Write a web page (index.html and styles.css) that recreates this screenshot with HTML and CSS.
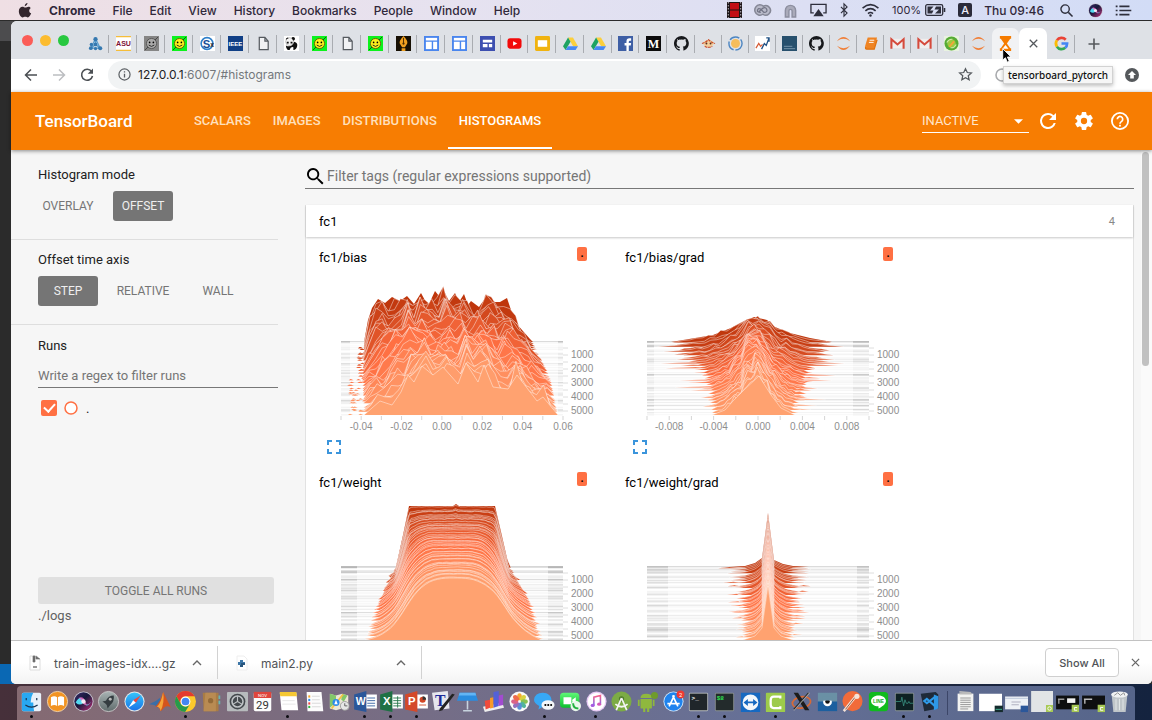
FILE: index.html
```html
<!DOCTYPE html>
<html lang="en">
<head>
<meta charset="utf-8">
<title>tensorboard_pytorch</title>
<link rel="stylesheet" href="styles.css">
</head>
<body class="desktop">

<svg class="sprite" width="0" height="0" aria-hidden="true">
  <defs>
    <linearGradient id="g-siri" x1="0" y1="0" x2="1" y2="1"><stop offset="0" stop-color="#3a2a6a"/><stop offset=".45" stop-color="#16173a"/><stop offset="1" stop-color="#c0307a"/></linearGradient>
    <linearGradient id="g-blue" x1="0" y1="0" x2="0" y2="1"><stop offset="0" stop-color="#35c5fa"/><stop offset="1" stop-color="#1a73e8"/></linearGradient>
    <linearGradient id="g-gray" x1="0" y1="0" x2="0" y2="1"><stop offset="0" stop-color="#a9b4b4"/><stop offset="1" stop-color="#5f6b6c"/></linearGradient>
    <linearGradient id="g-green" x1="0" y1="0" x2="0" y2="1"><stop offset="0" stop-color="#5ff777"/><stop offset="1" stop-color="#0bbf2c"/></linearGradient>
    <linearGradient id="g-music" x1="0" y1="0" x2="0" y2="1"><stop offset="0" stop-color="#f65f8a"/><stop offset="1" stop-color="#7b6cf0"/></linearGradient>
  </defs>
  <symbol id="f-net" viewBox="0 0 16 16"><path d="M8 3 3 13h10zM8 3v6M3 13l5-4 5 4" stroke="#5d9fcd" stroke-width="1.4" fill="none"/><g fill="#3579b0"><circle cx="8" cy="3.4" r="2.3"/><circle cx="8" cy="9" r="2"/><circle cx="3.6" cy="9" r="1.8"/><circle cx="3" cy="13" r="2"/><circle cx="13" cy="13" r="2.2"/><circle cx="8" cy="13.4" r="1.8"/></g></symbol>
  <symbol id="f-smile" viewBox="0 0 16 16"><rect width="16" height="16" fill="#0cf21c"/><path d="M1 15 15 1" stroke="#075a10"/><circle cx="8" cy="8" r="5.4" fill="#fdf01c" stroke="#685c08"/><circle cx="6" cy="6.8" r=".9"/><circle cx="10" cy="6.8" r=".9"/><path d="M5 9.6q3 3 6 0" fill="none" stroke="#222"/></symbol>
  <symbol id="f-smileg" viewBox="0 0 16 16"><rect width="16" height="16" fill="#858585"/><path d="M1 15 15 1" stroke="#444"/><circle cx="8" cy="8" r="5.4" fill="#aaa" stroke="#555"/><circle cx="6" cy="6.8" r=".9"/><circle cx="10" cy="6.8" r=".9"/><path d="M5 9.6q3 3 6 0" fill="none" stroke="#222"/></symbol>
  <symbol id="f-doc" viewBox="0 0 16 16"><path d="M3.500 1.500h6l3.500 4v9H3.500zM9.500 1.500v4H13" fill="#f1f2f4" stroke="#555a5f" stroke-width="1.3"/></symbol>
  <symbol id="f-lay" viewBox="0 0 16 16"><rect x="1" y="1" width="14" height="14" fill="#fff" stroke="#4a86ee" stroke-width="2"/><path d="M1 5.500h14M9 5.500V15" stroke="#4a86ee" stroke-width="1.5"/></symbol>
  <symbol id="f-drive" viewBox="0 0 16 16"><path d="M5.400 1.500h5.200L16 10.800h-5.200z" fill="#fbcf3d"/><path d="M5.400 1.500 8 6 2.700 15 0 10.800z" fill="#1da362"/><path d="M5.300 10.800H16L13.400 15H2.700z" fill="#4688f4"/></symbol>
  <symbol id="f-git" viewBox="0 0 16 16"><path fill="#17191c" d="M8 0a8 8 0 0 0-2.500 15.600c.4.1.5-.2.5-.4v-1.400c-2.200.5-2.700-1-2.700-1-.4-.9-.9-1.200-.9-1.200-.7-.5.1-.5.1-.5.8.1 1.200.8 1.200.8.7 1.300 1.900.9 2.300.7.1-.5.3-.9.5-1.100-1.800-.2-3.600-.9-3.600-4 0-.9.3-1.600.8-2.100-.1-.2-.4-1 .1-2.100 0 0 .7-.2 2.200.8a7.500 7.500 0 0 1 4 0c1.500-1 2.200-.8 2.200-.8.4 1.100.2 1.900.1 2.100.5.6.8 1.300.8 2.100 0 3.100-1.900 3.700-3.700 3.900.3.300.6.8.6 1.500v2.200c0 .2.100.5.6.4A8 8 0 0 0 8 0z"/></symbol>
  <symbol id="f-jup" viewBox="0 0 16 16"><path d="M1 5.500Q8-3.500 15 5.500 8 .5 1 5.500zM1 10.500q7 9 14 0-7 5-14 0z" fill="#f0803a"/></symbol>
  <symbol id="f-gmail" viewBox="0 0 16 16"><path d="M1 3h14v10H1z" fill="#f0eeee"/><path d="M1.500 13.500V3.500L8 9l6.500-5.500v10" fill="none" stroke="#d54a3c" stroke-width="2.200"/></symbol>
  <symbol id="i-siri" viewBox="0 0 24 24"><circle cx="12" cy="12" r="11.500" fill="#c9c9d4"/><circle cx="12" cy="12" r="10.500" fill="url(#g-siri)"/><path d="M3 13q6-10 9-1t9 0q-5 7-9 1-4 5-9 0z" fill="#52d8f0"/><path d="M6 8q6-3 8 4t6 1q-6 6-9 0-3-5-5-5z" fill="#e765c0" opacity=".8"/><circle cx="12" cy="12" r="2.500" fill="#fff" opacity=".85"/></symbol>
</svg>

<header class="menubar">
  <nav class="menus" aria-label="Menu bar">
    <svg class="apple" viewBox="0 0 16 18" aria-hidden="true"><path fill="#33262d" d="M11 0c.1 1.700-1.500 3.800-3.300 3.800C7.500 2 9.300.2 11 0zM14.800 6.200c-2.600 1.600-2.200 5 .6 6.200-.9 2.500-2.400 4.900-4 4.900-1.200 0-1.600-.8-3.100-.8s-2 .8-3.200.8C3 17.200.6 13.500.6 9.900c0-3.400 2.200-5.300 4.300-5.300 1.500 0 2.400.9 3.600.9 1.100 0 2-1 3.800-1 1 0 2 .6 2.500 1.700z"/></svg>
    <a href="#chrome" class="app-name">Chrome</a><a href="#file">File</a><a href="#edit">Edit</a><a href="#view">View</a><a href="#history">History</a><a href="#bookmarks">Bookmarks</a><a href="#people">People</a><a href="#window">Window</a><a href="#help">Help</a>
  </nav>
  <div class="status">
    <svg viewBox="0 0 15 16" width="15" height="16"><path fill="#1c1416" d="M0 0h15v16H0z"/><path fill="#c10d16" d="M3 1h9v6.500H3zM3 8.500h9V15H3z"/><path d="M1.300 0v16M13.700 0v16" stroke="#b9b3bd" stroke-width="1" stroke-dasharray="1.500 1.500"/></svg>
    <svg viewBox="0 0 18 14" width="17" height="14"><path d="M6 1.500a5.500 5.500 0 1 0 3.500 10A5 5 0 1 0 10 3 5.500 5.500 0 0 0 6 1.500z" fill="#b9bac9" stroke="#858796" stroke-width="1.600"/><path d="m5.500 8.500 4-3.500q3-1.500 4 1.500t-3 3L7 6Q4.500 4.500 3.800 7t3.400 2.500" fill="none" stroke="#727485" stroke-width="1.300"/></svg>
    <svg viewBox="0 0 16 16" width="15" height="15"><path d="M2.500 15V8a5.500 5.500 0 0 1 11 0v7H9.700V8.500a1.700 1.700 0 0 0-3.400 0V15z" fill="#aaabba" stroke="#8d8fa0" stroke-width="1.500"/></svg>
    <svg viewBox="0 0 18 14" width="17" height="14"><path d="M4 10H1V1h16v9h-3" fill="none" stroke="#2e2f3c" stroke-width="1.400"/><path d="m9 6 5.500 7.500h-11z" fill="#2e2f3c"/></svg>
    <svg viewBox="0 0 10 16" width="10" height="14"><path d="m1.500 4.500 7 7L5 15V1l3.500 3.500-7 7" fill="none" stroke="#2e2f3c" stroke-width="1.300"/></svg>
    <svg viewBox="0 0 20 15" width="19" height="14"><path d="M1.500 5.500q8.500-7.500 17 0M4.500 8.500q5.500-4.800 11 0M7.300 11.300q2.700-2.300 5.400 0" fill="none" stroke="#2e2f3c" stroke-width="1.700"/><circle cx="10" cy="13.300" r="1.300" fill="#2e2f3c"/></svg>
    <span class="battery"><span class="percent">100%</span>
    <svg viewBox="0 0 21 12" width="21" height="12"><rect x=".7" y=".7" width="17" height="10.600" rx="1.500" fill="none" stroke="#2e2f3c" stroke-width="1.300"/><path d="M2.500 2.500h6L5 6.500h3.500L7 9.500H2.500zM16 2.500h-5L9.500 5.500h4.500L10 9.500h6z" fill="#2e2f3c"/><path d="M19.500 4v4" stroke="#2e2f3c" stroke-width="1.600"/></svg></span>
    <span class="input-source">A</span>
    <span class="clock">Thu 09:46</span>
    <svg class="spotlight" viewBox="0 0 14 14" width="13" height="13"><circle cx="5.500" cy="5.500" r="4.500" fill="none" stroke="#2e2f3c" stroke-width="1.500"/><path d="m9 9 4.500 4.500" stroke="#2e2f3c" stroke-width="1.600"/></svg>
    <svg width="15" height="15"><use href="#i-siri"/></svg>
    <svg viewBox="0 0 17 12" width="17" height="11"><path d="M4 1.500h11M4 6h13M4 10.500h11" stroke="#2e2f3c" stroke-width="1.700"/><path d="M0 1.500h2M0 6h2M0 10.500h2" stroke="#2e2f3c" stroke-width="1.700"/></svg>
  </div>
</header>

<div class="window">
  <div class="tabstrip">
    <div class="lights"><button class="light close" aria-label="Close window"></button><button class="light minimize" aria-label="Minimize window"></button><button class="light maximize" aria-label="Zoom window"></button></div>
    <div class="tabs">
      <button class="tab" aria-label="Tab 1"><svg><use href="#f-net"/></svg></button>
      <button class="tab" aria-label="Tab 2"><svg viewBox="0 0 16 16"><rect width="16" height="16" fill="#fff"/><path d="M0 .7h16M0 15.300h16" stroke="#f5bd3a" stroke-width="1.400"/><text x="8" y="11" class="ico" font-size="7.500" fill="#7d1237" text-anchor="middle">ASU</text></svg></button>
      <button class="tab" aria-label="Tab 3"><svg><use href="#f-smileg"/></svg></button>
      <button class="tab" aria-label="Tab 4"><svg><use href="#f-smile"/></svg></button>
      <button class="tab" aria-label="Tab 5"><svg viewBox="0 0 16 16"><rect width="16" height="16" fill="#fff"/><circle cx="7.500" cy="8" r="6.300" fill="none" stroke="#2e7fca" stroke-width="1.700"/><text x="7" y="12.500" class="ico" font-size="12" fill="#164f98" text-anchor="middle">S</text><text x="13" y="12" class="ico" font-size="7" fill="#222" text-anchor="middle">x</text></svg></button>
      <button class="tab" aria-label="Tab 6"><svg viewBox="0 0 16 16"><rect width="16" height="16" fill="#103f86"/><text x="8" y="10.500" class="ico" font-size="6.500" fill="#fff" text-anchor="middle">IEEE</text></svg></button>
      <button class="tab" aria-label="Tab 7"><svg><use href="#f-doc"/></svg></button>
      <button class="tab" aria-label="Tab 8"><svg viewBox="0 0 16 16"><rect width="16" height="16" fill="#fff"/><circle cx="6" cy="6" r="4.200" fill="#f4f4f4" stroke="#999" stroke-width=".6"/><path d="M2 4a2 2 0 0 1 3-2zM8 2a2 2 0 1 1 2 3zM3 6h2v2H3zM7 6h2v2H7zM2 10q6 3 9-4 4 1 3 5-1 4-4 4v-3q-3-1-4 3H4q-2-2-2-5z" fill="#111"/></svg></button>
      <button class="tab" aria-label="Tab 9"><svg><use href="#f-smile"/></svg></button>
      <button class="tab" aria-label="Tab 10"><svg><use href="#f-doc"/></svg></button>
      <button class="tab" aria-label="Tab 11"><svg><use href="#f-smile"/></svg></button>
      <button class="tab" aria-label="Tab 12"><svg viewBox="0 0 16 16"><rect width="16" height="16" fill="#171004"/><path d="M8 0q5 5 4 8l-2.500 4H6.500L4 8Q3 5 8 0zM6 13h4v3H6z" fill="#f0a020"/><path d="M8 2v6" stroke="#4a2b00"/><circle cx="8" cy="8" r="1.200" fill="#4a2b00"/></svg></button>
      <button class="tab" aria-label="Tab 13"><svg><use href="#f-lay"/></svg></button>
      <button class="tab" aria-label="Tab 14"><svg><use href="#f-lay"/></svg></button>
      <button class="tab" aria-label="Tab 15"><svg viewBox="0 0 16 16"><rect width="16" height="16" fill="#3d4fb0"/><path d="M3 4h10v3H3zM3 8.500h5V12H3zM9.500 8.500H13V12H9.500z" fill="#fff"/></svg></button>
      <button class="tab slim" aria-label="Tab 16"><svg viewBox="0 0 16 16"><rect x=".5" y="2.500" width="15" height="11" rx="3" fill="#f20a0a"/><path d="m6.500 5.500 4.500 2.500-4.500 2.500z" fill="#fff"/></svg></button>
      <button class="tab" aria-label="Tab 17"><svg viewBox="0 0 16 16"><rect width="16" height="16" rx="1.500" fill="#f0b310"/><rect x="3" y="4.500" width="10" height="7" fill="#fff"/></svg></button>
      <button class="tab" aria-label="Tab 18"><svg><use href="#f-drive"/></svg></button>
      <button class="tab" aria-label="Tab 19"><svg><use href="#f-drive"/></svg></button>
      <button class="tab slim" aria-label="Tab 20"><svg viewBox="0 0 16 16"><rect width="16" height="16" fill="#3e5fa5"/><path d="M9 16V10H7V7.500h2V6q0-3.500 3.300-3.500H14V5h-1.300Q11.500 5 11.500 6.200v1.300H14L13.600 10h-2.100v6z" fill="#fff"/></svg></button>
      <button class="tab" aria-label="Tab 21"><svg viewBox="0 0 16 16"><rect width="16" height="16" fill="#0c0c0c"/><text x="8" y="12.500" class="serif" font-size="13" fill="#fff" text-anchor="middle">M</text></svg></button>
      <button class="tab" aria-label="Tab 22"><svg><use href="#f-git"/></svg></button>
      <button class="tab slim" aria-label="Tab 23"><svg viewBox="0 0 16 16"><ellipse cx="8" cy="8" rx="5.500" ry="3.600" fill="#f2cf9c"/><path d="M1 8q4-1 7-4 3 3 7 4M4 11q4 2.500 8 0" stroke="#cc4e2a" stroke-width="1.300" fill="none" stroke-dasharray="3 .8"/><circle cx="5.800" cy="8" r="1" fill="#5b2a1a"/><circle cx="10.200" cy="8" r="1" fill="#5b2a1a"/></svg></button>
      <button class="tab slim" aria-label="Tab 24"><svg viewBox="0 0 16 16"><circle cx="8" cy="8" r="4.800" fill="#f6bd5b"/><circle cx="8" cy="8" r="7" fill="none" stroke="#4d86c2" stroke-width="1.500" stroke-dasharray="11 2"/></svg></button>
      <button class="tab slim" aria-label="Tab 25"><svg viewBox="0 0 16 16"><rect width="16" height="16" fill="#fff"/><path d="m1 13 3-5 2 3 2-2" fill="none" stroke="#d65a35" stroke-width="1.300"/><path d="m7 14 3-6 2 2 3-8M12 2h3v4" fill="none" stroke="#1d4f83" stroke-width="1.400"/></svg></button>
      <button class="tab slim" aria-label="Tab 26"><svg viewBox="0 0 16 16"><rect width="16" height="16" fill="#27506d"/><path d="M2 11h9M2 13.500h12" stroke="#8fa9bb" stroke-width=".8"/></svg></button>
      <button class="tab slim" aria-label="Tab 27"><svg><use href="#f-git"/></svg></button>
      <button class="tab slim" aria-label="Tab 28"><svg><use href="#f-jup"/></svg></button>
      <button class="tab slim" aria-label="Tab 29"><svg viewBox="0 0 16 16"><path d="M5 1.500h10l-3 10H2z" fill="#ef8423"/><path d="M3 11.500q-1 2.500 1 2.500h8l3-10" fill="#ef8423" stroke="#e0720f" stroke-width="1.300"/><path d="M7 4.500h5M6.300 6.800h5" stroke="#fff" stroke-width="1"/></svg></button>
      <button class="tab slim" aria-label="Tab 30"><svg><use href="#f-gmail"/></svg></button>
      <button class="tab slim" aria-label="Tab 31"><svg><use href="#f-gmail"/></svg></button>
      <button class="tab slim" aria-label="Tab 32"><svg viewBox="0 0 16 16"><rect width="16" height="16" fill="#e9f3e0"/><circle cx="8" cy="8" r="7.500" fill="#55ab35"/><circle cx="8" cy="8" r="4.500" fill="#9cc93f"/><path d="M5 11 10 5l1.500 1.500-5 5.500z" fill="#f4a53a"/><path d="M3 7q2-4 6-3.500M13 9q-2 4-6 3.500" stroke="#cdeaa8" stroke-width="1.200" fill="none"/></svg></button>
      <button class="tab slim last" aria-label="Tab 33"><svg><use href="#f-jup"/></svg></button>
      <button class="tab slim hover" aria-label="tensorboard_pytorch"><svg viewBox="0 0 16 16"><path d="M2 0h12v3H13L9.500 8l3.500 5h1v3H2v-3h1l3.500-5L3 3H2z" fill="#f57c00"/><path d="M8 9.500 4.800 13.700h6.400z" fill="#fff"/></svg>
        <svg class="pointer" viewBox="0 0 10 15"><path d="M.7.700v11.500l2.700-2.500 1.900 4.500 2-1-1.900-4.200h3.700z" fill="#000" stroke="#fff" stroke-width=".9"/></svg>
        <span class="tooltip" role="tooltip">tensorboard_pytorch</span></button>
      <button class="tab active" aria-label="Close tab"><svg viewBox="0 0 16 16"><path d="m4 4 8 8M12 4l-8 8" stroke="#54585c" stroke-width="1.400"/></svg></button>
      <button class="tab google" aria-label="Google"><svg viewBox="0 0 16 16"><g fill="none" stroke-width="2.800"><path d="M3.100 4.600A6 6 0 0 1 12.500 4" stroke="#ea4335"/><path d="M3.100 11.400a6 6 0 0 1 0-6.800" stroke="#fbbc05"/><path d="M12 12.500a6 6 0 0 1-8.900-1.100" stroke="#34a853"/><path d="M8 8h6q0 3-2 4.500" stroke="#4285f4"/></g></svg></button>
      <button class="new-tab" aria-label="New tab"><svg viewBox="0 0 12 12"><path d="M6 .5v11M.5 6h11" stroke="#55595d" stroke-width="1.600"/></svg></button>
    </div>
  </div>

  <div class="toolbar">
    <button class="tool" aria-label="Back"><svg viewBox="0 0 14 14"><path d="M13 7H1.800M7 1.500 1.500 7 7 12.500" fill="none" stroke="#4b4f53" stroke-width="1.500"/></svg></button>
    <button class="tool" aria-label="Forward"><svg viewBox="0 0 14 14"><path d="M1 7h11.200M7 1.500 12.500 7 7 12.500" fill="none" stroke="#bcbec1" stroke-width="1.500"/></svg></button>
    <button class="tool" aria-label="Reload"><svg viewBox="0 0 14 14"><path d="M11.600 3.500A5.500 5.500 0 1 0 12.500 8" fill="none" stroke="#4b4f53" stroke-width="1.600"/><path d="M13 .5v5.300H7.700z" fill="#4b4f53"/></svg></button>
    <div class="omnibox">
      <svg viewBox="0 0 14 14" width="13" height="13"><circle cx="7" cy="7" r="6" fill="none" stroke="#5a5e62" stroke-width="1.300"/><path d="M7 6.200v4M7 3.500v1.300" stroke="#5a5e62" stroke-width="1.400"/></svg>
      <a href="#histograms" class="url"><span class="host">127.0.0.1</span>:6007/#histograms</a>
      <button class="star" aria-label="Bookmark this page"><svg viewBox="0 0 16 16"><path d="m8 1.800 1.900 4.100 4.400.4-3.400 3 1 4.400L8 11.400l-3.900 2.300 1-4.400-3.400-3 4.400-.4z" fill="none" stroke="#55595d" stroke-width="1.300"/></svg></button>
    </div>
    <button class="tool ext" aria-label="Extension"><svg viewBox="0 0 14 14"><circle cx="7" cy="7" r="6" fill="none" stroke="#a9abae" stroke-width="1.600"/></svg></button>
    <button class="tool profile" aria-label="Update browser"><svg viewBox="0 0 14 14"><circle cx="7" cy="7" r="7" fill="#55585b"/><path d="m7 3 4 4H8.800v3.500H5.200V7H3z" fill="#fff"/></svg></button>
  </div>

  <header class="appbar">
    <h1 class="brand">TensorBoard</h1>
    <nav class="views">
      <a href="#scalars">SCALARS</a><a href="#images">IMAGES</a><a href="#distributions">DISTRIBUTIONS</a><a href="#histograms" class="current">HISTOGRAMS</a>
    </nav>
    <div class="inactive">
      <select aria-label="Inactive dashboards"><option>INACTIVE</option></select>
      <svg viewBox="0 0 10 5"><path d="M0 0h10L5 5z" fill="#fff"/></svg>
    </div>
    <div class="actions">
      <button aria-label="Reload data"><svg viewBox="3 3 18 18"><path fill="#fff" d="M17.650 6.350A7.960 7.960 0 0 0 12 4a8 8 0 1 0 7.730 10h-2.080A6 6 0 1 1 12 6c1.660 0 3.140.69 4.220 1.780L13 11h7V4z"/></svg></button>
      <button aria-label="Settings"><svg viewBox="2 2 20 20"><path fill="#fff" d="M19.430 12.980c.04-.32.07-.64.07-.98s-.03-.66-.07-.98l2.110-1.650a.5.5 0 0 0 .12-.64l-2-3.460a.5.5 0 0 0-.61-.22l-2.490 1a7.300 7.300 0 0 0-1.690-.98l-.38-2.650A.49.49 0 0 0 14 2h-4a.49.49 0 0 0-.49.42l-.38 2.650c-.61.25-1.170.59-1.690.98l-2.490-1a.49.49 0 0 0-.61.220l-2 3.460a.49.49 0 0 0 .12.640l2.110 1.650c-.04.32-.07.65-.07.980s.03.660.07.980l-2.110 1.650a.5.5 0 0 0-.12.640l2 3.460c.12.220.39.300.61.220l2.490-1c.52.400 1.080.730 1.690.980l.38 2.650c.03.240.24.420.49.420h4c.25 0 .46-.18.49-.42l.38-2.650a7.300 7.300 0 0 0 1.690-.98l2.490 1c.23.090.49 0 .61-.22l2-3.460a.5.5 0 0 0-.12-.64zM12 15.500a3.500 3.500 0 1 1 0-7 3.500 3.500 0 0 1 0 7z"/></svg></button>
      <button aria-label="Help"><svg viewBox="2 2 20 20"><circle cx="12" cy="12" r="9" fill="none" stroke="#fff" stroke-width="2"/><path d="M9 10a3 3 0 1 1 4.800 2.400Q12 13.500 12 15" fill="none" stroke="#fff" stroke-width="1.900"/><path fill="#fff" d="M11 16.200h2v2h-2z"/></svg></button>
    </div>
  </header>

  <div class="content">
    <aside class="sidebar">
      <section class="setting">
        <h2>Histogram mode</h2>
        <div class="choices"><button>OVERLAY</button><button class="on">OFFSET</button></div>
      </section>
      <section class="setting">
        <h2>Offset time axis</h2>
        <div class="choices"><button class="on">STEP</button><button>RELATIVE</button><button>WALL</button></div>
      </section>
      <section class="runs">
        <h2><label for="run-filter">Runs</label></h2>
        <input id="run-filter" class="run-filter" type="text" placeholder="Write a regex to filter runs">
        <div class="run"><input type="checkbox" id="run-root" checked><svg class="ring" viewBox="0 0 14 14"><circle cx="7" cy="7" r="6" fill="#fff" stroke="#ff7043" stroke-width="1.500"/></svg><label for="run-root">.</label></div>
      </section>
      <div class="sidebar-foot">
        <button class="toggle-all">TOGGLE ALL RUNS</button>
        <p>./logs</p>
      </div>
    </aside>

    <main class="board">
      <div class="board-scroll">
        <div class="filter">
          <svg viewBox="3 3 18 18"><path d="M15.500 14h-.79l-.28-.27A6.500 6.500 0 1 0 13.730 14.430l.27.28v.79l5 5L20.500 19zM9.500 14a4.500 4.500 0 1 1 0-9 4.500 4.500 0 0 1 0 9z" fill="#000"/></svg>
          <input type="text" aria-label="Filter tags" placeholder="Filter tags (regular expressions supported)">
        </div>
        <section class="group">
          <button class="group-head"><span>fc1</span><span class="count">4</span></button>
          <div class="cards">
            <article class="card"><div class="card-head"><h3>fc1/bias</h3><span class="chip">.</span></div><svg class="chart" data-chart="bias" viewBox="0 0 290 170"></svg><button class="expand" aria-label="Expand fc1/bias"><svg viewBox="0 0 14 14"><path d="M1 5V1h4M9 1h4v4M13 9v4H9M5 13H1V9"/></svg></button></article>
            <article class="card"><div class="card-head"><h3>fc1/bias/grad</h3><span class="chip">.</span></div><svg class="chart" data-chart="biasGrad" viewBox="0 0 290 170"></svg><button class="expand" aria-label="Expand fc1/bias/grad"><svg viewBox="0 0 14 14"><path d="M1 5V1h4M9 1h4v4M13 9v4H9M5 13H1V9"/></svg></button></article>
            <article class="card"><div class="card-head"><h3>fc1/weight</h3><span class="chip">.</span></div><svg class="chart" data-chart="weight" viewBox="0 0 290 170"></svg></article>
            <article class="card"><div class="card-head"><h3>fc1/weight/grad</h3><span class="chip">.</span></div><svg class="chart" data-chart="weightGrad" viewBox="0 0 290 170"></svg></article>
          </div>
        </section>
      </div>
      <div class="scrollbar"><span class="thumb"></span></div>
    </main>
  </div>

  <footer class="downloads">
    <div class="download">
      <svg viewBox="0 0 12 16"><path d="M1 1h7l3 3v11H1z" fill="#fff" stroke="#ddd"/><path d="M4 1h2v6H4zM7 1v3h4" fill="#666" stroke="#777" stroke-width=".7"/><path d="M4 12h4" stroke="#777" stroke-width="1.500"/></svg>
      <a href="#train-images">train-images-idx....gz</a>
      <button aria-label="Options for train-images-idx"><svg viewBox="0 0 10 6"><path d="m1 5 4-4 4 4"/></svg></button>
    </div>
    <div class="download">
      <svg viewBox="0 0 12 16"><path d="M1 1h7l3 3v11H1z" fill="#fff" stroke="#eee"/><path d="M4 5h3v2h2v3H7v2H4v-2H2V7h2z" fill="#3d77a8"/><path d="M5 8h4v2H7v2H4v-2h1z" fill="#29567e"/></svg>
      <a href="#main2">main2.py</a>
      <button aria-label="Options for main2.py"><svg viewBox="0 0 10 6"><path d="m1 5 4-4 4 4"/></svg></button>
    </div>
    <button class="show-all">Show All</button>
    <button class="dismiss" aria-label="Close downloads"><svg viewBox="0 0 10 10"><path d="m1 1 8 8M9 1 1 9" stroke="#666" stroke-width="1.400"/></svg></button>
  </footer>
</div>

<div class="dock">
  <div class="dock-item open"><svg viewBox="0 0 24 24"><rect x="1" y="2" width="22" height="21" rx="2" fill="#e8f1fa"/><path d="M3 2h11q-3 5-3 11h3q0 6 1 10H3q-2 0-2-2V4q0-2 2-2z" fill="#28a8f2"/><path d="M6 8v2.500M18 8v2.500M5 16q7 5 14 0" fill="none" stroke="#1b3550" stroke-width="1.400"/></svg></div>
  <div class="dock-item"><svg viewBox="0 0 24 24"><circle cx="12" cy="12" r="11.500" fill="#f29423" stroke="#f8d9ae"/><path d="M4.500 7q4-2 7 0v10q-3-2-7 0zM19.500 7q-4-2-7 0v10q3-2 7 0z" fill="#fff"/></svg></div>
  <div class="dock-item"><svg viewBox="0 0 24 24"><use href="#i-siri"/></svg></div>
  <div class="dock-item"><svg viewBox="0 0 24 24"><circle cx="12" cy="12" r="11.500" fill="url(#g-gray)" stroke="#ccc"/><path d="M18 5q-6 0-9 6l-4 1 3 2 2 2 1 4 3-4q5-4 4-11z" fill="#343c40"/><circle cx="14" cy="9.500" r="1.700" fill="#bbb"/></svg></div>
  <div class="dock-item"><svg viewBox="0 0 24 24"><circle cx="12" cy="12" r="11.500" fill="#e0e6ea"/><circle cx="12" cy="12" r="10.300" fill="url(#g-blue)"/><path d="m19 5-5.500 8.500-3-3z" fill="#f2453b"/><path d="m5 19 5.500-8.500 3 3z" fill="#fff"/></svg></div>
  <div class="dock-item"><svg viewBox="0 0 24 24"><path d="m-1 15 8-4 4-3 3 3-5 8-4-3z" fill="#3a6ea8"/><path d="M15 1q3 6 9 18-4-3-8 0-2 3-4 4-1-5-6-5 6-6 9-17z" fill="#d4541d"/><path d="M15 1q-2 12-7 17 4 1 4 5 5-10 3-22z" fill="#f5a43a"/></svg></div>
  <div class="dock-item open"><svg viewBox="0 0 24 24"><circle cx="12" cy="12" r="12" fill="#fbc92c"/><path d="M1.600 6A12 12 0 0 1 22.400 6H12a6 6 0 0 0-5.200 9z" fill="#e33b2e"/><path d="M1.600 6a12 12 0 0 0 10 18L17 15a6 6 0 0 1-10.200 0z" fill="#279a4b"/><circle cx="12" cy="12" r="5.600" fill="#fff"/><circle cx="12" cy="12" r="4.400" fill="#4286f0"/></svg></div>
  <div class="dock-item"><svg viewBox="0 0 24 24"><path d="M2 2h18v21H3z" fill="#a97c45"/><path d="M5 2h12v21H3z" fill="#b98b52"/><circle cx="11" cy="11" r="3" fill="#936a38"/><path d="M20 5h2v4h-2zM20 11h2v4h-2z" fill="#69b7b0"/></svg></div>
  <div class="dock-item"><svg viewBox="0 0 24 24"><rect x="0" y="1" width="24" height="22" rx="1" fill="#b7bbbd"/><circle cx="12" cy="12" r="9" fill="#44494d"/><circle cx="12" cy="12" r="6.300" fill="none" stroke="#bfc3c6" stroke-width="1.800"/><path d="M12 12V6M12 12l5 3M12 12l-5 3" stroke="#bfc3c6" stroke-width="1.300"/></svg></div>
  <div class="dock-item"><svg viewBox="0 0 24 24"><rect x="2" y="1" width="20" height="22" rx="2" fill="#fcfcfc"/><path d="M2 1h20v7H2z" fill="#e0453c"/><text x="12" y="20.500" class="thin" font-size="13" text-anchor="middle" fill="#333">29</text><text x="12" y="6.500" class="thin" font-size="5" text-anchor="middle" fill="#fff">NOV</text></svg></div>
  <div class="dock-item open"><svg viewBox="0 0 24 24"><path d="M2 2h19l2 20H4z" fill="#fff"/><path d="M2 1h19l.6 5H2.500z" fill="#f5c833"/><path d="M5 11h14M5 15h15" stroke="#ddd" stroke-width=".8"/></svg></div>
  <div class="dock-item"><svg viewBox="0 0 24 24"><path d="M3 1h17l2 22H4z" fill="#fcfcfc"/><g stroke-width="2.200"><path d="M6 5v2.500" stroke="#f5a623"/><path d="M6 9v2.500" stroke="#2c8ef0"/><path d="M6 13v2.500" stroke="#e44"/><path d="M6 17v2.500" stroke="#3b4"/></g><path d="M9 6h9M9 10h9M9 14h10M9 18h10" stroke="#ccc" stroke-width=".8"/></svg></div>
  <div class="dock-item"><svg viewBox="0 0 24 24"><path d="M1 3l7 2 7-2 7 2v16l-7-1-7 2-7-2z" fill="#ece7d5"/><path d="M1 3l7 2v8l-7 6zM15 3l6 2-4 7-3-2z" fill="#82c76a"/><path d="m3 20 13-16" stroke="#f5c242" stroke-width="2"/><circle cx="8" cy="13" r="4" fill="#2c8bea"/><path d="m8 10 2 5H6z" fill="#fff"/><circle cx="18" cy="17" r="5" fill="#e6e6e6" stroke="#999"/><path d="M18 17v-3M18 17h3" stroke="#555"/></svg></div>
  <div class="dock-item open"><svg viewBox="0 0 24 24"><path d="M11 4h14v16H11z" fill="#fff"/><path d="M14 8h9M14 11h9M14 14h9M14 17h9" stroke="#2e5b9e"/><path d="m-1 4 14-4v24L-1 21z" fill="#2b579a"/><text x="6.500" y="16.500" class="ico" font-size="12" fill="#fff" text-anchor="middle">W</text></svg></div>
  <div class="dock-item open"><svg viewBox="0 0 24 24"><path d="M11 4h14v16H11z" fill="#fff"/><path d="M14 8h9M14 11h9M14 14h9M14 17h9M19 6v13" stroke="#217346"/><path d="m-1 4 14-4v24L-1 21z" fill="#1f7145"/><text x="6.500" y="16.500" class="ico" font-size="13" fill="#fff" text-anchor="middle">X</text></svg></div>
  <div class="dock-item open"><svg viewBox="0 0 24 24"><path d="M11 4h14v16H11z" fill="#fff"/><circle cx="19" cy="10" r="3.500" fill="#d24726"/><path d="M19 10V6a4 4 0 0 1 4 4z" fill="#333"/><path d="M15 16h8" stroke="#d24726"/><path d="m-1 4 14-4v24L-1 21z" fill="#d4492a"/><text x="6.500" y="16.500" class="ico" font-size="13" fill="#fff" text-anchor="middle">P</text></svg></div>
  <div class="dock-item"><svg viewBox="0 0 24 24"><path d="m0 2 18-2 2 20-17 2z" fill="#e6e6ee"/><text x="9.500" y="17" class="serif" font-size="18" fill="#1e2b9a" text-anchor="middle">T</text><path d="M26 4 12 22l-4 1 1-3L23 3z" fill="#222"/></svg></div>
  <div class="dock-item"><svg viewBox="0 0 24 24"><path d="M3 2h18l3 9H0z" fill="#2a8de0"/><path d="M3 2h18l1 3H2z" fill="#62b5f5"/><path d="M12 11v10M7 22.500h10" stroke="#c7d3de" stroke-width="1.800"/></svg></div>
  <div class="dock-item"><svg viewBox="0 0 24 24"><path d="m0 18 22-5 2 6-22 5z" fill="#eee"/><path d="m2 11 6-1v9l-5 2z" fill="#f04b3b"/><path d="m8 8 4-1v12l-4 1z" fill="#f79a28"/><path d="m12 1 6-1v17l-6 2z" fill="#5361d9"/><path d="m18 5 5-1v12l-5 1z" fill="#a24bd0"/></svg></div>
  <div class="dock-item"><svg viewBox="0 0 24 24"><circle cx="12" cy="12" r="11.500" fill="#fafafa"/><g opacity=".9"><ellipse cx="12" cy="6.500" rx="2.700" ry="4" fill="#f6a21d"/><ellipse cx="12" cy="6.500" rx="2.700" ry="4" fill="#d7cf2e" transform="rotate(45 12 12)"/><ellipse cx="12" cy="6.500" rx="2.700" ry="4" fill="#7cbb42" transform="rotate(90 12 12)"/><ellipse cx="12" cy="6.500" rx="2.700" ry="4" fill="#3fae92" transform="rotate(135 12 12)"/><ellipse cx="12" cy="6.500" rx="2.700" ry="4" fill="#4686d4" transform="rotate(180 12 12)"/><ellipse cx="12" cy="6.500" rx="2.700" ry="4" fill="#8b62b8" transform="rotate(225 12 12)"/><ellipse cx="12" cy="6.500" rx="2.700" ry="4" fill="#d8527c" transform="rotate(270 12 12)"/><ellipse cx="12" cy="6.500" rx="2.700" ry="4" fill="#ee5c3a" transform="rotate(315 12 12)"/></g></svg></div>
  <div class="dock-item open"><svg viewBox="0 0 24 24"><path d="M10 2c6 0 10 4 10 8.500S16 18 10 18l-5 3 1-4Q0 14 0 10 1 2 10 2z" fill="#38a8f5"/><ellipse cx="16" cy="16" rx="7.500" ry="5.500" fill="#f4f7fa"/><circle cx="13" cy="16" r="1.200"/><circle cx="16.300" cy="16" r="1.200"/><circle cx="19.600" cy="16" r="1.200"/></svg></div>
  <div class="dock-item"><svg viewBox="0 0 24 24"><rect x="0" y="2" width="22" height="17" rx="4" fill="url(#g-green)"/><path d="M4 7h9v8H4zM14 10l4-3v8l-4-3z" fill="#fff"/><circle cx="18" cy="17" r="6" fill="#e9f7eb"/><path d="M15 14q0 6 6 6" stroke="#22b140" stroke-width="2.200" fill="none"/></svg></div>
  <div class="dock-item open"><svg viewBox="0 0 24 24"><circle cx="12" cy="12" r="11.500" fill="#e6c9f4"/><circle cx="12" cy="12" r="10" fill="#fff"/><path d="M9 16.500V7l7.500-1.800V15" fill="none" stroke="url(#g-music)" stroke-width="1.800"/><ellipse cx="7.600" cy="16.500" rx="2.300" ry="1.800" fill="#a55be0"/><ellipse cx="15" cy="15" rx="2.300" ry="1.800" fill="#d457b8"/></svg></div>
  <div class="dock-item"><svg viewBox="0 0 24 24"><circle cx="12" cy="12" r="11.500" fill="#7cab45"/><circle cx="12" cy="9" r="3" fill="#4e7b2a"/><path d="M12 8 6 22M12 8l6 14M5 15q7 6 14 0" stroke="#f4f4f4" stroke-width="2" fill="none"/></svg></div>
  <div class="dock-item"><svg viewBox="0 0 24 24"><path d="M4 9h13v10q0 1-1 1h-2v4h-2.500v-4h-2v4H7v-4H5q-1 0-1-1zM1 10h2v7H1zM18 10h2v7h-2zM4 8q0-5 6.500-5T17 8z" fill="#8fb83e"/><circle cx="20" cy="5" r="4" fill="#6f9b2c"/></svg></div>
  <div class="dock-item"><svg viewBox="0 0 24 24"><circle cx="12" cy="12" r="11.500" fill="#d5e8fa"/><circle cx="12" cy="12" r="10.500" fill="#1f83ee"/><path d="M13 5 7 17.500M11 5l6 12.500M5 14.500h14" stroke="#fff" stroke-width="1.900"/><circle cx="20" cy="4" r="4.500" fill="#ee3b33"/><text x="20" y="6.300" class="thin" font-size="6.500" fill="#fff" text-anchor="middle">2</text></svg></div>
  <div class="dock-item open"><svg viewBox="0 0 24 24"><rect x="1" y="2" width="22" height="21" rx="1.500" fill="#b9bdbf"/><rect x="2" y="3" width="20" height="19" fill="#20262a"/><text x="4" y="10" class="mono" font-size="7" fill="#fff">&gt;_</text></svg></div>
  <div class="dock-item open"><svg viewBox="0 0 24 24"><rect x="1" y="2" width="22" height="21" rx="1.500" fill="#8d9395"/><rect x="2" y="3" width="20" height="19" fill="#232b2c"/><text x="3" y="10" class="mono" font-size="7" fill="#2fe052">$8</text></svg></div>
  <div class="dock-item"><svg viewBox="0 0 24 24"><rect x="1" y="2" width="22" height="22" fill="#1669c1"/><circle cx="12" cy="13" r="9" fill="#f3f7fb"/><path d="m4 13 5-4v3h6V9l5 4-5 4v-3H9v3z" fill="#1669c1"/></svg></div>
  <div class="dock-item open"><svg viewBox="0 0 24 24"><rect x="1" y="2" width="22" height="22" rx="1" fill="#9dcb4b"/><path d="M17.500 8.500V6.500H10q-3.500 0-3.500 4v5q0 4 3.500 4h7.500v-2" fill="none" stroke="#fff" stroke-width="2.600"/></svg></div>
  <div class="dock-item"><svg viewBox="0 0 24 24"><ellipse cx="12" cy="13" rx="10.500" ry="6.500" fill="none" stroke="#d86a35" stroke-width="2" transform="rotate(-10 12 13)"/><path d="M3 2h5l13 20h-5z" fill="#1c1c1c"/><path d="M21 2 3 22" stroke="#aaa" stroke-width="1.500"/><path d="M20 2 3 21" stroke="#222" stroke-width="1.200"/></svg></div>
  <div class="dock-item"><svg viewBox="0 0 24 24"><rect x="1" y="2" width="22" height="11" fill="#6a90a5"/><rect x="1" y="12" width="22" height="11" fill="#1c5f9f"/><circle cx="12" cy="12.500" r="5" fill="#fff"/><circle cx="12" cy="12" r="2.600" fill="#111"/><path d="M6 6h12v5H6z" fill="#6a90a5"/></svg></div>
  <div class="dock-item"><svg viewBox="0 0 24 24"><circle cx="12" cy="11.500" r="11.500" fill="#f26b3a"/><path d="m2 23 13-16" stroke="#f5e3d8" stroke-width="3"/><path d="m4 21 11-14" stroke="#8a4a2f" stroke-width="1"/><circle cx="17" cy="6" r="3" fill="#f5e3d8"/></svg></div>
  <div class="dock-item"><svg viewBox="0 0 24 24"><rect x="1" y="1" width="22" height="22" rx="4" fill="#0fbb1d"/><path d="M12 5c5 0 8.500 2.800 8.500 6.400 0 3.600-5 7-8.500 8.600v-2.500c-5 0-8.500-2.600-8.500-6.100S7 5 12 5z" fill="#fff"/><text x="12" y="13.500" class="ico" font-size="5.500" fill="#0fae1d" text-anchor="middle">LINE</text></svg></div>
  <div class="dock-item open"><svg viewBox="0 0 24 24"><rect x="1" y="2" width="22" height="21" rx="1.500" fill="#8b9498"/><rect x="2" y="3" width="20" height="19" fill="#0e2224"/><path d="M2 12h6l1-5 2 10 1.500-7 1.500 4h2l1-2 1 2h4" fill="none" stroke="#3e9f8c" stroke-width=".8"/></svg></div>
  <div class="dock-item open"><svg viewBox="0 0 24 24"><path d="m2 3 17-2 3 3v16l-16 3z" fill="#1f2a38"/><path d="m17 4 5 2v14l-5 2z" fill="#2e97e5"/><path d="m18 7-9 7-3-2.500L9 9l9 8" fill="none" stroke="#2f9bea" stroke-width="2.400"/></svg></div>
  <span class="dock-sep"></span>
  <div class="dock-item"><svg viewBox="0 0 24 24"><path d="M3 3h18v20H3z" fill="#f3f3f1"/><path d="M5 3h14M5 1l13 1" stroke="#bbb" stroke-width="2"/><path d="M6 8h12M6 10.500h12M6 13h12M6 15.500h12M6 18h12M6 20.500h9" stroke="#8e8e8e"/></svg></div>
  <div class="dock-item wide"><svg viewBox="0 0 24 24"><path d="M-1 3h25v19H-1z" fill="#fff"/><path d="M16 16h9v7h-9z" fill="#152b2d"/><path d="M17 20h7" stroke="#4b9"/></svg></div>
  <div class="dock-item wide"><svg viewBox="0 0 24 24"><path d="M-1 6h25v14H-1z" fill="#eef1f6"/><path d="M-1 8h25" stroke="#b9c5d8"/><path d="M6 12h10M6 15h8" stroke="#aab"/><path d="M16 16h8v7h-8z" fill="#2b579a"/></svg></div>
  <div class="dock-item"><svg viewBox="0 0 24 24"><path d="M-1 0h25v24H-1z" fill="#e1e4e6"/><path d="M16 16h8v8h-8z" fill="#a8c956"/><circle cx="20" cy="20" r="2" fill="none" stroke="#fff"/></svg></div>
  <div class="dock-item wide"><svg viewBox="0 0 24 24"><path d="M-1 5h25v15H-1z" fill="#0e0f10"/><path d="M11 8h9v5h-9z" fill="#f3f3f3"/><path d="M1 9h7M2 9v5" stroke="#999" stroke-width="1.500"/><path d="M16 15h8v8h-8z" fill="#a8c956"/><path d="M22 18h-3v3h3" fill="none" stroke="#fff"/></svg></div>
  <div class="dock-item wide"><svg viewBox="0 0 24 24"><path d="M-1 5h25v15H-1z" fill="#0e0f10"/><path d="M1 9h9M2 9v5" stroke="#bbb" stroke-width="1.500"/><path d="M16 15h8v8h-8z" fill="#a8c956"/><path d="M22 18h-3v3h3" fill="none" stroke="#fff"/></svg></div>
  <div class="dock-item"><svg viewBox="0 0 24 24"><path d="M3 4h18l-2 20H5z" fill="#bfc5c9"/><ellipse cx="12" cy="4" rx="9.500" ry="3.500" fill="#f0f2f3"/><path d="m6 5 4-3 3 3 4-3 1 3" fill="none" stroke="#888"/><path d="M8 9v13M12 9v13M16 9v13" stroke="#e6eaec"/></svg></div>
</div>

<script src="charts.js"></script>
</body>
</html>
```

FILE: styles.css
```css
* { box-sizing: border-box; }

body, h1, h2, h3, p { margin: 0; }

button, input, select {
  font: inherit;
  color: inherit;
  border: 0;
  padding: 0;
  background: none;
  border-radius: 0;
}

a { color: inherit; text-decoration: none; }
svg { display: block; flex: none; overflow: visible; }
.sprite { position: absolute; }

.ico { font-family: "Liberation Sans", sans-serif; font-weight: 700; }
.thin { font-family: Roboto, sans-serif; }
.serif { font-family: "Liberation Serif", serif; font-weight: 700; }
.mono { font-family: "Liberation Mono", monospace; font-weight: 700; }

.desktop {
  display: flex;
  flex-direction: column;
  height: 100vh;
  overflow: hidden;
  font-family: Roboto, sans-serif;
  font-size: 13px;
  background:
    linear-gradient(90deg, #46303a, #2b2a3c 50%, #14233f) bottom / 100% 36px no-repeat,
    linear-gradient(#0a68b4, #0a68b4) left 0 bottom 36px / 16px 20px no-repeat,
    linear-gradient(90deg, #4c4c4e, #4c4c4e) left 0 top 21px / 16px 20px no-repeat,
    #2b2b2b;
}

/* menu bar */
.menubar {
  flex: none;
  display: flex;
  justify-content: space-between;
  align-items: center;
  height: 20px;
  padding: 0 20px 0 18px;
  font-family: Inter, sans-serif;
  font-size: 12px;
  font-weight: 500;
  color: #30283a;
  background: linear-gradient(90deg, #efdfe4, #e6e2f0 40%, #d2dcf6);
}
.menus { display: flex; align-items: center; gap: 17px; }
.apple { width: 14px; height: 15px; }
.app-name { font-weight: 700; }
.status { display: flex; align-items: center; gap: 12px; }
.battery { display: flex; align-items: center; gap: 4px; }
.percent { font-size: 11px; font-weight: 400; }
.input-source {
  width: 14px;
  height: 14px;
  border-radius: 2px;
  background: #2a2b3a;
  color: #eceefa;
  font-size: 11px;
  line-height: 14px;
  text-align: center;
}
.clock { font-size: 12px; }
.spotlight { margin: 0 3px 0 4px; }

/* browser window */
.window {
  flex: 1;
  min-height: 0;
  display: flex;
  flex-direction: column;
  margin: 1px 0 0 11px;
  border-radius: 6px 0 5px 5px;
  background: #fff;
}
.tabstrip {
  flex: none;
  display: flex;
  height: 38px;
  padding-left: 11px;
  background: #dee1e6;
  border-radius: 6px 0 0 0;
}
.lights { display: flex; gap: 7px; align-items: center; width: 59px; }
.light { width: 11px; height: 11px; border-radius: 50%; }
.close { background: #fb5d57; }
.minimize { background: #fcbc2f; }
.maximize { background: #28c840; }
.tabs { display: flex; align-items: flex-end; }
.tab {
  position: relative;
  flex: none;
  display: grid;
  place-items: center;
  width: 28px;
  height: 31px;
}
.tab > svg { width: 15px; height: 15px; }
.tab.slim { width: 27px; }
.tab::after {
  content: "";
  position: absolute;
  right: 0;
  top: 7px;
  width: 1px;
  height: 18px;
  background: #a9acb1;
}
.tab.last::after, .tab.hover::after, .tab.active::after { display: none; }
.tab.hover { z-index: 2; border-radius: 7px 7px 0 0; background: #f1f2f4; }
.tab.active { border-radius: 7px 7px 0 0; background: #fff; }
.tab.hover > .pointer { position: absolute; left: 10px; top: 20px; width: 10px; height: 15px; }
.tooltip {
  position: absolute;
  left: 11px;
  top: 38px;
  height: 18px;
  padding: 0 4px;
  font-family: "Noto Sans", sans-serif;
  font-size: 10px;
  font-weight: 500;
  line-height: 16px;
  color: #111;
  white-space: nowrap;
  background: #f6f6f6;
  border: 1px solid #d2d2d2;
  box-shadow: 0 2px 4px rgba(0, 0, 0, .25);
}
.new-tab { display: grid; place-items: center; width: 38px; height: 31px; }
.new-tab svg { width: 12px; height: 12px; }

.toolbar {
  flex: none;
  display: flex;
  align-items: center;
  height: 33px;
  padding: 0 13px 2px 6px;
  background: #fff;
}
.tool { display: grid; place-items: center; width: 28px; height: 28px; }
.tool svg { width: 14px; height: 14px; }
.omnibox {
  flex: 1;
  display: flex;
  align-items: center;
  gap: 7px;
  height: 28px;
  margin: 0 14px 0 7px;
  padding: 0 8px 0 10px;
  border-radius: 14px;
  background: #f1f3f4;
}
.url { flex: 1; font-family: Inter, sans-serif; font-size: 12px; color: #74787c; }
.host { color: #202124; }
.star svg { width: 15px; height: 15px; }
.tool.ext { width: 14px; margin-right: 116px; }
.tool.profile { width: 14px; }

/* application bar */
.appbar {
  position: relative;
  z-index: 1;
  flex: none;
  display: flex;
  align-items: center;
  height: 58px;
  padding: 0 22px 1px 24px;
  color: #fff;
  background: #f77d02;
  box-shadow: 0 1px 4px rgba(0, 0, 0, .45);
}
.brand { width: 148px; font-size: 17px; font-weight: 500; }
.views { display: flex; align-self: stretch; font-weight: 500; }
.views a {
  display: flex;
  align-items: center;
  padding: 0 11px;
  border-bottom: 2px solid transparent;
  border-top: 2px solid transparent;
  color: #ffe0bd;
}
.views .current { color: #fff; border-bottom-color: #fff; }
.inactive { position: relative; width: 107px; margin-left: auto; }
.inactive select {
  width: 100%;
  height: 25px;
  appearance: none;
  border-bottom: 1px solid #fff;
  color: #ffe6cb;
}
.inactive svg { position: absolute; right: 6px; top: 11px; width: 9px; height: 5px; }
.actions { display: flex; gap: 16px; margin-left: 9px; }
.actions button { display: grid; place-items: center; width: 20px; height: 20px; }
.actions svg { width: 18px; height: 18px; }

/* page content */
.content { flex: 1; min-height: 0; display: flex; background: #f6f6f6; }
.sidebar { flex: none; display: flex; flex-direction: column; width: 267px; }
.sidebar h2 { font-size: 13px; font-weight: 400; line-height: 16px; color: #212121; }
.setting { padding: 17px 0 18px 27px; border-bottom: 1px solid #dedede; }
.setting + .setting { padding-top: 12px; }
.choices { display: flex; gap: 15px; margin-top: 8px; }
.setting .choices button {
  width: 60px;
  height: 30px;
  border-radius: 3px;
  font-size: 12px;
  text-align: center;
  color: #757575;
}
.setting .choices .on { background: #757575; color: #efefef; }
.runs { padding: 13px 0 0 27px; }
.run-filter {
  display: block;
  width: 100%;
  height: 24px;
  margin-top: 10px;
  border-bottom: 1px solid #777;
}
::placeholder { color: #757575; opacity: 1; }
.run { display: flex; align-items: center; gap: 7px; height: 16px; margin: 12px 0 0 3px; }
.run input {
  appearance: none;
  width: 16px;
  height: 16px;
  margin: 0;
  display: grid;
  place-items: center;
  border-radius: 2px;
  background: #ff7043;
}
.run input::before {
  content: "";
  width: 5px;
  height: 9px;
  margin-top: -3px;
  border: solid #fff;
  border-width: 0 2px 2px 0;
  transform: rotate(42deg);
}
.ring { width: 14px; height: 14px; }
.run label { margin-left: 1px; color: #212121; }
.sidebar-foot { margin-top: auto; padding: 0 4px 16px 27px; color: #616161; }
.toggle-all {
  width: 100%;
  height: 27px;
  border-radius: 3px;
  background: #e0e0e0;
  font-size: 12px;
  color: #757575;
}
.sidebar-foot p { margin-top: 4px; line-height: 16px; }

.board { flex: 1; min-width: 0; display: flex; }
.board-scroll { flex: 1; min-width: 0; overflow: hidden; padding: 14px 7px 0 27px; }
.filter { display: flex; align-items: center; gap: 3px; height: 25px; padding-left: 2px; border-bottom: 1px solid #777; }
.filter svg { width: 17px; height: 17px; }
.filter input { flex: 1; font-size: 14px; }
.group { margin-top: 16px; background: #fff; border: solid #e2e2e2; border-width: 0 1px; }
.group-head {
  display: flex;
  justify-content: space-between;
  align-items: center;
  width: 100%;
  height: 32px;
  padding: 0 18px 0 13px;
  background: #fff;
  color: #000;
  box-shadow: 0 1px 2px rgba(0, 0, 0, .22);
}
.count { font-size: 11px; color: #888; }
.cards { display: flex; flex-wrap: wrap; padding: 10px 0 0 9px; }
.card { width: 306px; height: 225px; }
.card-head { display: flex; justify-content: space-between; align-items: flex-start; height: 19px; padding: 0 34px 0 4px; }
.card h3 { font-size: 13px; font-weight: 400; line-height: 22px; color: #000; }
.chip { width: 10px; height: 14px; border-radius: 2px; background: #ff7043; color: #000; font-size: 11px; font-weight: 700; line-height: 14px; text-align: center; }
.chart { width: 290px; height: 170px; }
.chart text { font-family: "Liberation Sans", sans-serif; font-size: 10px; fill: #8e8e8e; }
.expand { display: block; margin: 4px 0 0 12px; }
.expand svg { width: 14px; height: 14px; fill: none; stroke: #3b95dc; stroke-width: 2; }
.scrollbar { flex: none; width: 11px; padding: 2px 3px 0 1px; background: #fafafa; }
.thumb { display: block; height: 214px; border-radius: 4px; background: #c1c1c1; }

/* download shelf */
.downloads {
  flex: none;
  display: flex;
  align-items: center;
  height: 44px;
  padding-right: 12px;
  border-top: 1px solid #c2c2c2;
  border-radius: 0 0 5px 5px;
  background: linear-gradient(#fff 50%, #f3f3f3);
  font-family: Inter, sans-serif;
  font-size: 12px;
  color: #505357;
}
.download { display: flex; align-items: center; width: 204px; height: 33px; padding: 0 13px 0 18px; border-right: 1px solid #d2d2d2; }
.download:first-child { width: 207px; }
.download > svg { width: 12px; height: 16px; margin-right: 13px; }
.download a { flex: 1; white-space: nowrap; line-height: 16px; padding-top: 2px; }
.download button { display: grid; place-items: center; width: 14px; height: 14px; }
.download button svg { width: 10px; height: 6px; fill: none; stroke: #666; stroke-width: 1.400; }
.show-all { width: 74px; height: 29px; margin-left: auto; border: 1px solid #cfcfcf; border-radius: 4px; background: #fff; font-size: 11px; font-weight: 500; }
.dismiss { margin-left: 12px; }
.dismiss svg { width: 9px; height: 9px; }

/* dock */
.dock {
  flex: none;
  display: flex;
  height: 34px;
  margin: 2px 17px 0 17px;
  padding: 0 3px 0 2px;
  border-radius: 4px 4px 0 0;
  background: linear-gradient(90deg, #856a72, #766d85 35%, #667096 65%, #56658a);
}
.dock-item { position: relative; flex: 1; display: flex; justify-content: center; padding-top: 5px; }
.dock-item svg { width: 21px; height: 21px; }
.dock-item.wide svg { width: 22px; height: 22px; }
.dock-item.open::after {
  content: "";
  position: absolute;
  left: 50%;
  bottom: 2px;
  width: 3px;
  height: 3px;
  margin-left: -2px;
  border-radius: 50%;
  background: #0b0b10;
}
.dock-sep { width: 1px; height: 24px; margin: 5px 5px 0 4px; background: #3c4668; }
```

FILE: charts.js
```javascript
(function () {
  var NS = 'http://www.w3.org/2000/svg';
  var TOP = 76, BOTTOM = 149;

  // Height profiles as [x, height] pairs: first step, middle, last step.
  var charts = {
    bias: {
      steps: 36, left: 26, right: 248, ticks: 11, noise: 16, bins: 28, seed: 7, line: .55,
      labels: ['-0.04', '-0.02', '0.00', '0.02', '0.04', '0.06'], edges: [9, 5], islands: true,
      keys: [
        [[49, 0], [53, 22], [57, 34], [63, 43], [70, 39], [77, 45], [85, 41], [92, 46], [99, 38], [106, 49], [113, 36], [120, 51], [124, 46], [128, 53], [134, 41], [140, 49], [144, 40], [149, 48], [153, 37], [156, 41], [164, 35], [171, 45], [180, 40], [185, 40], [192, 44], [200, 20], [215, 3], [218, 0]],
        [[47, 0], [60, 14], [75, 28], [92, 42], [106, 46], [118, 38], [128, 42], [140, 36], [150, 43], [166, 45], [180, 30], [193, 33], [203, 26], [215, 15], [228, 5], [236, 0]],
        [[49, 0], [65, 14], [77, 10], [86, 23], [93, 40], [99, 33], [107, 49], [118, 40], [128, 48], [143, 31], [151, 52], [163, 33], [169, 50], [178, 28], [193, 26], [202, 40], [222, 14], [228, 18], [243, 0]]
      ]
    },
    biasGrad: {
      steps: 38, left: 26, right: 248, ticks: 10, noise: 7, bins: 26, seed: 33, tail: 32, line: .55,
      labels: ['-0.008', '-0.004', '0.000', '0.004', '0.008'], edges: [7, 16],
      keys: [
        [[50, 0], [80, 5], [92, 7], [110, 14], [119, 19], [133, 25], [146, 22], [154, 15], [169, 9], [189, 4], [211, 0]],
        [[84, 0], [96, 5], [108, 12], [118, 22], [127, 40], [136, 41], [146, 26], [156, 15], [168, 7], [188, 0]],
        [[91, 0], [104, 5], [112, 14], [124, 26], [138, 39], [150, 20], [160, 7], [174, 0]]
      ]
    },
    weight: {
      steps: 48, left: 26, right: 248, ticks: 0, noise: .5, bins: 44, seed: 3, tail: 4, smooth: 7, line: .55,
      labels: [], edges: [16, 15],
      keys: [
        [[81, 0], [88, 32], [94, 61], [138, 61], [141, 63], [144, 61], [180, 61], [187, 31], [194, 0]],
        [[63, 0], [76, 10], [84, 22], [92, 42], [104, 56], [114, 61], [162, 61], [172, 56], [182, 42], [190, 22], [200, 10], [216, 0]],
        [[51, 0], [60, 2], [70, 7], [82, 17], [90, 32], [98, 44], [108, 55], [118, 60], [128, 62], [152, 62], [164, 59], [174, 53], [184, 44], [192, 29], [200, 18], [208, 11], [217, 4], [226, 0]]
      ]
    },
    weightGrad: {
      steps: 44, left: 26, right: 248, ticks: 0, noise: 0, bins: 0, seed: 5, tail: 12, line: .5,
      labels: [], edges: [21, 12],
      keys: [
        [[108, 0], [124, 1], [134, 4], [141, 9], [147, 54], [153, 7], [162, 3], [172, 1], [188, 0]],
        [[118, 0], [130, 3], [137, 7], [141, 12], [147, 54], [153, 12], [158, 7], [165, 3], [178, 0]],
        [[122, 0], [134, 4], [141, 12], [147, 54], [153, 12], [160, 4], [172, 0]]
      ]
    }
  };

  function random(seed) {
    return function () {
      seed = (seed * 16807) % 2147483647;
      return seed / 2147483647;
    };
  }
  function add(parent, name, attrs, text) {
    var node = document.createElementNS(NS, name);
    Object.keys(attrs).forEach(function (k) { node.setAttribute(k, attrs[k]); });
    if (text) node.textContent = text;
    parent.appendChild(node);
  }
  function heightAt(points, x) {
    if (x <= points[0][0]) return 0;
    for (var i = 1; i < points.length; i++) {
      var a = points[i - 1], b = points[i];
      if (x <= b[0]) return a[1] + (b[1] - a[1]) * (x - a[0]) / (b[0] - a[0]);
    }
    return 0;
  }
  function smoothHeight(points, x, r) {
    if (!r) return heightAt(points, x);
    return (heightAt(points, x - r) + heightAt(points, x - r / 2) + heightAt(points, x) +
      heightAt(points, x + r / 2) + heightAt(points, x + r)) / 5;
  }
  function mix(a, b, t) { return a + (b - a) * t; }
  function colour(t) {
    var stops = [[191, 54, 12], [255, 112, 67], [255, 162, 112]];
    var i = t < .5 ? 0 : 1, u = t * 2 - i;
    return 'rgb(' + [0, 1, 2].map(function (c) { return Math.round(mix(stops[i][c], stops[i + 1][c], u)); }) + ')';
  }

  function draw(svg, c) {
    var rnd = random(c.seed * 7919), span = c.right - c.left, last = c.steps - 1;
    var drift = [], times = [], s, i;
    for (s = 0; s <= last; s++) times.push(s === 0 ? 0 : s === last ? 1 : (s + (rnd() - .5) * 1.5) / last);
    times.sort(function (a, b) { return a - b; });

    // Baselines of the steps, running past both sides of the ridges.
    times.forEach(function (t, n) {
      var y = mix(TOP, BOTTOM, t), dark = n === 0 ? .14 : .02 + rnd() * rnd() * .1;
      add(svg, 'rect', { x: c.left, y: y - 1, width: span, height: 1.2, fill: '#000', opacity: dark });
      add(svg, 'rect', { x: c.left, y: y - 1, width: c.edges[0], height: 2, fill: '#000', opacity: dark * .8 });
      add(svg, 'rect', { x: c.right - c.edges[1], y: y - 1, width: c.edges[1], height: 2, fill: '#000', opacity: dark * .8 });
    });

    times.forEach(function (t, s) {
      var y = mix(TOP, BOTTOM, t);
      var k = t < .5 ? 0 : 1, u = t * 2 - k, A = c.keys[k], B = c.keys[k + 1];
      var lo = mix(A[0][0], B[0][0], u), hi = mix(A[A.length - 1][0], B[B.length - 1][0], u);
      var start = lo, end = hi, ends = s === 0 || s === last;
      if (c.tail && !ends) {
        start = Math.max(c.left + 10, start - Math.pow(rnd(), 4) * c.tail);
        end = Math.min(c.right - 20, end + Math.pow(rnd(), 4) * c.tail);
      }
      var xs = [];
      if (!c.bins || (ends && !(c.smooth && s))) (s === last ? B : A.concat(s ? B : [])).forEach(function (p) { xs.push(p[0]); });
      else for (i = 1; i < c.bins; i++) xs.push(mix(lo, hi, i / c.bins));
      xs = xs.filter(function (x) { return x > lo && x < hi; }).sort(function (a, b) { return a - b; });
      var line = 'M' + start.toFixed(1) + ' ' + y.toFixed(1);
      if (start < lo - 6) line += 'L' + lo.toFixed(1) + ' ' + (y - 1.2).toFixed(1);
      xs.forEach(function (x, n) {
        drift[n] = (drift[n] || 0) * .68 + (rnd() - .5) * c.noise;
        var r = c.smooth ? c.smooth * t : 0;
        var h = mix(smoothHeight(A, x, r), smoothHeight(B, x, r), u);
        if (!ends) h += drift[n] * Math.min(1, h / 18);
        line += 'L' + x.toFixed(1) + ' ' + (y - Math.max(.3, h)).toFixed(1);
      });
      if (end > hi + 6) line += 'L' + hi.toFixed(1) + ' ' + (y - 1.2).toFixed(1);
      line += 'L' + end.toFixed(1) + ' ' + y.toFixed(1);
      add(svg, 'path', { d: line + 'Z', fill: colour(t) });
      if (s) add(svg, 'path', { d: line, fill: 'none', stroke: '#fff', 'stroke-width': .8, opacity: c.line });
      if (c.islands && t > .08) {
        var reach = t > .5 ? 15 : 6;
        for (i = 0; i < 2; i++) {
          var x0 = 47 - rnd() * reach;
          add(svg, 'path', { d: 'M' + x0 + ' ' + y + 'l2-1.2 3 1.2z', fill: colour(t) });
        }
      }
    });

    var ticks = c.ticks || 10;
    for (i = 0; i <= ticks; i++) {
      add(svg, 'path', { d: 'M' + (c.left + span * i / ticks) + ' 150v4', stroke: '#d5d5d5' });
    }
    c.labels.forEach(function (label, n) {
      add(svg, 'text', { x: c.left + span * (1 + n * 2) / ticks, y: 164, 'text-anchor': 'middle' }, label);
    });
    for (i = 1; i <= 10; i++) add(svg, 'path', { d: 'M' + c.right + ' ' + (75 + i * 7) + 'h5', stroke: '#dedede' });
    for (i = 1; i <= 5; i++) add(svg, 'text', { x: 256, y: 78 + i * 14 }, i + '000');
  }

  document.querySelectorAll('[data-chart]').forEach(function (svg) {
    draw(svg, charts[svg.dataset.chart]);
  });
})();
```
